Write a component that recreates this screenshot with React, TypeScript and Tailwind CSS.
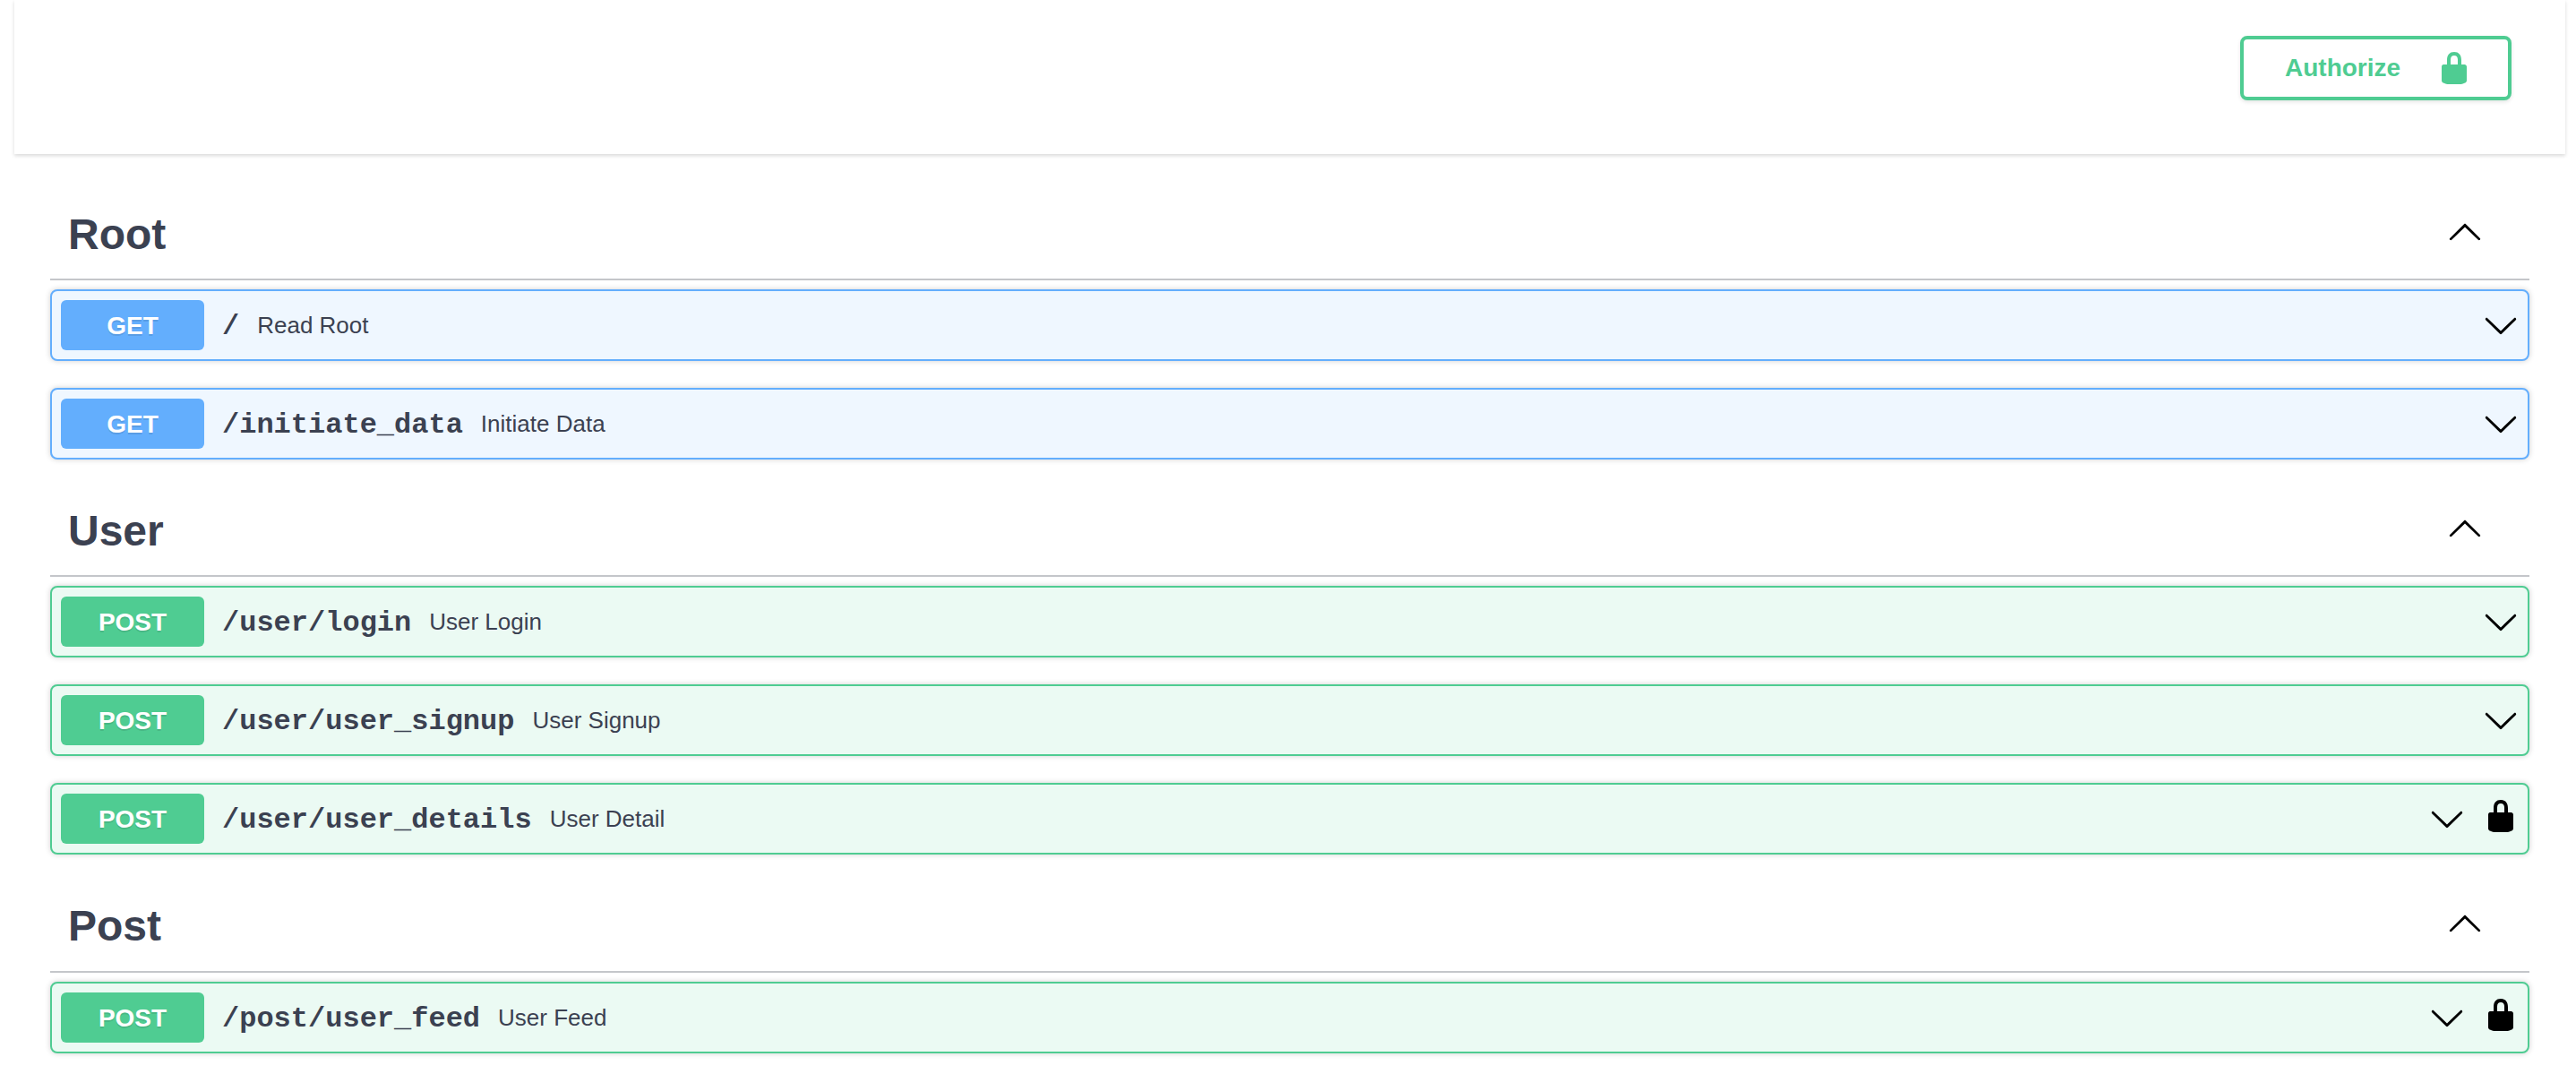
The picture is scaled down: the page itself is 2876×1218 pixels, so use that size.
const Chevron = ({ up }: { up?: boolean }) => (
  <svg viewBox="0 0 20 20" className="w-10 h-10 shrink-0" fill="#000">
    {up ? (
      <path d="M17.418 14.908c.272.268.709.268.979 0s.271-.701 0-.969l-7.908-7.83c-.27-.268-.707-.268-.979 0l-7.908 7.83c-.27.268-.27.701 0 .969.271.268.709.268.979 0L10 7.75l7.418 7.158z" />
    ) : (
      <path d="M17.418 6.109c.272-.268.709-.268.979 0s.271.701 0 .969l-7.908 7.83c-.27.268-.707.268-.979 0l-7.908-7.83c-.27-.268-.27-.701 0-.969.271-.268.709-.268.979 0L10 13.25l7.418-7.141z" />
    )}
  </svg>
);

const Lock = ({ color, cls }: { color: string; cls?: string }) => (
  <svg viewBox="0 0 20 20" className={`w-10 h-10 shrink-0 ${cls ?? ""}`} fill={color}>
    <path d="M15.8 8H14V5.6C14 2.703 12.665 1 10 1 7.334 1 6 2.703 6 5.6V8H4c-.553 0-1 .646-1 1.199V17c0 .549.428 1.139.951 1.307l1.197.387C5.672 18.861 6.55 19 7.1 19h5.8c.549 0 1.428-.139 1.951-.307l1.196-.387c.524-.167.953-.757.953-1.306V9.199C17 8.646 16.352 8 15.8 8zM12 8H8V5.199C8 3.754 8.797 3 10 3c1.203 0 2 .754 2 2.199V8z" />
  </svg>
);

type Op = { method: "GET" | "POST"; path: string; summary: string; locked?: boolean };

const Row = ({ op }: { op: Op }) => {
  const get = op.method === "GET";
  return (
    <div
      className={`flex items-center h-20 mb-[30px] rounded-lg border-2 p-2.5 shadow-[0_0_6px_rgba(0,0,0,0.19)] ${
        get ? "border-[#63aefd] bg-[#eff7ff]" : "border-[#4fcc92] bg-[#ebfaf3]"
      }`}
    >
      <div
        className={`w-40 h-14 shrink-0 flex items-center justify-center pt-0.5 rounded-md text-[28px] font-bold text-white [text-shadow:0_2px_0_rgba(0,0,0,0.1)] font-['Liberation_Sans',sans-serif] ${
          get ? "bg-[#63aefd]" : "bg-[#4fcc92]"
        }`}
      >
        {op.method}
      </div>
      <span className="px-5 pt-[3px] text-[32px] font-bold text-[#3b4151] font-['Liberation_Mono',monospace]">
        {op.path}
      </span>
      <span className="flex-1 text-[26px] text-[#3b4151] font-['Liberation_Sans',sans-serif]">
        {op.summary}
      </span>
      <Chevron />
      {op.locked && <Lock color="#000" cls="ml-5 mb-1.5" />}
    </div>
  );
};

const Section = ({ title, ops, raised }: { title: string; ops: Op[]; raised?: boolean }) => (
  <section>
    <div
      className={`h-[101px] flex items-center justify-between border-b-2 border-[#3b41514d] pl-5 pr-[52px] mb-2.5 ${
        raised ? "pb-0.5" : ""
      }`}
    >
      <h3 className="text-[48px] font-bold text-[#3b4151] font-['Liberation_Sans',sans-serif]">{title}</h3>
      <span className="mb-2">
        <Chevron up />
      </span>
    </div>
    {ops.map((o) => (
      <Row key={o.path} op={o} />
    ))}
  </section>
);

export default function App() {
  return (
    <div className="min-h-screen bg-white overflow-hidden">
      <div className="ml-4 mr-3 h-[172px] bg-white flex justify-end items-start pt-10 pr-[60px] shadow-[0_2px_4px_0_rgba(0,0,0,0.15)]">
        <button className="flex items-center h-[72px] w-[303px] pl-[46px] pr-10 justify-between rounded-lg border-4 border-[#4fcc92] bg-white text-[28px] font-bold text-[#4fcc92] shadow-[0_2px_4px_rgba(0,0,0,0.1)] font-['Liberation_Sans',sans-serif]">
          <span>Authorize</span>
          <Lock color="#4fcc92" />
        </button>
      </div>
      <div className="ml-14 mr-[52px] mt-10">
        <Section
          title="Root"
          ops={[
            { method: "GET", path: "/", summary: "Read Root" },
            { method: "GET", path: "/initiate_data", summary: "Initiate Data" },
          ]}
        />
        <Section
          title="User"
          ops={[
            { method: "POST", path: "/user/login", summary: "User Login" },
            { method: "POST", path: "/user/user_signup", summary: "User Signup" },
            { method: "POST", path: "/user/user_details", summary: "User Detail", locked: true },
          ]}
        />
        <div className="pt-px">
          <Section
            title="Post"
            raised
            ops={[{ method: "POST", path: "/post/user_feed", summary: "User Feed", locked: true }]}
          />
        </div>
      </div>
    </div>
  );
}
